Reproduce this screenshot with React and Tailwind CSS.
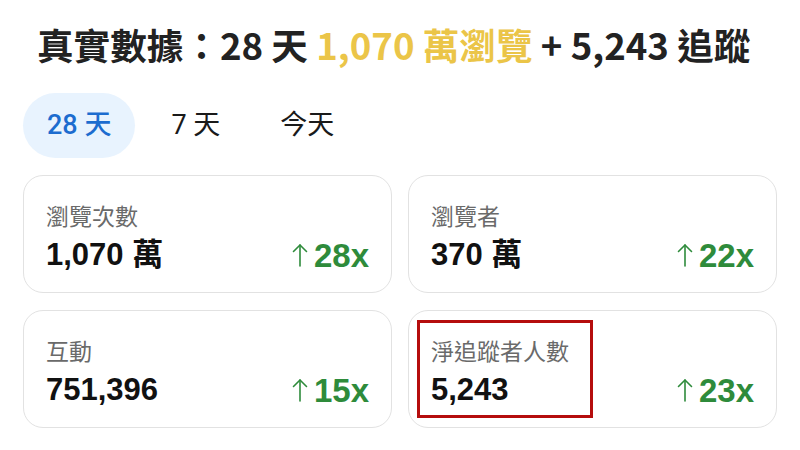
import React from "react";

const cjk = { fontFamily: '"Noto Sans CJK TC", "Noto Sans", sans-serif' };
const tab = { fontFamily: 'Roboto, "Noto Sans CJK TC", sans-serif' };
const num = { fontFamily: '"Liberation Sans", "Noto Sans CJK TC", sans-serif' };

const stats = [
  { label: "瀏覽次數", value: "1,070 萬", growth: "28x" },
  { label: "瀏覽者", value: "370 萬", growth: "22x" },
  { label: "互動", value: "751,396", growth: "15x" },
  { label: "淨追蹤者人數", value: "5,243", growth: "23x", marked: true },
];

const UpArrow = () => (
  <svg width="16" height="24" viewBox="0 0 16 24" fill="none" stroke="currentColor" strokeWidth="1.6" strokeLinecap="round" strokeLinejoin="round">
    <path d="M8 23V2" />
    <path d="M1.5 8.5L8 2l6.5 6.5" />
  </svg>
);

const StatCard = ({ label, value, growth, marked }) => (
  <div className="relative h-[118px] rounded-[20px] border-[1.5px] border-[#e2e2e2] bg-white pl-[22px] pr-[22px] pt-[22px]">
    {marked && (
      <div className="absolute left-[8px] top-[9px] h-[98px] w-[176px] border-[3px] border-[#b50d0d]" />
    )}
    <div className="text-[23px] leading-[34px] text-[#6a6a6a]" style={cjk}>
      {label}
    </div>
    <div className="mt-[5px] flex items-center justify-between">
      <span className="text-[31px] font-bold leading-[36px] text-[#111]" style={num}>
        {value}
      </span>
      <span className="flex items-center gap-[6px] text-[#2e8b3b]" style={num}>
        <UpArrow />
        <span className="text-[33px] font-bold leading-none">{growth}</span>
      </span>
    </div>
  </div>
);

export default function App() {
  return (
    <div className="h-[450px] w-[800px] overflow-hidden bg-white">
      {/* Headline */}
      <h1
        className="pl-[37px] pt-[20px] text-[36.6px] font-bold leading-[50px] text-[#222]"
        style={cjk}
      >
        真實數據：28 天 <span className="text-[#ebc548]">1,070 萬瀏覽</span> + 5,243 追蹤
      </h1>

      {/* Range tabs */}
      <div className="mt-[23px] flex gap-[12px] px-[23px]" style={tab}>
        <button className="h-[65px] rounded-full bg-[#e8f3fe] px-[24px] text-[27px] font-medium text-[#1c6ccf]">
          28 天
        </button>
        <button className="h-[65px] rounded-full px-[24px] text-[27px] text-[#1a1a1a]">
          7 天
        </button>
        <button className="h-[65px] rounded-full px-[24px] text-[27px] text-[#1a1a1a]">
          今天
        </button>
      </div>

      {/* Stat cards */}
      <div className="mt-[17px] grid grid-cols-2 gap-x-[16px] gap-y-[17px] px-[23px]">
        {stats.map((s) => (
          <StatCard key={s.label} {...s} />
        ))}
      </div>
    </div>
  );
}
